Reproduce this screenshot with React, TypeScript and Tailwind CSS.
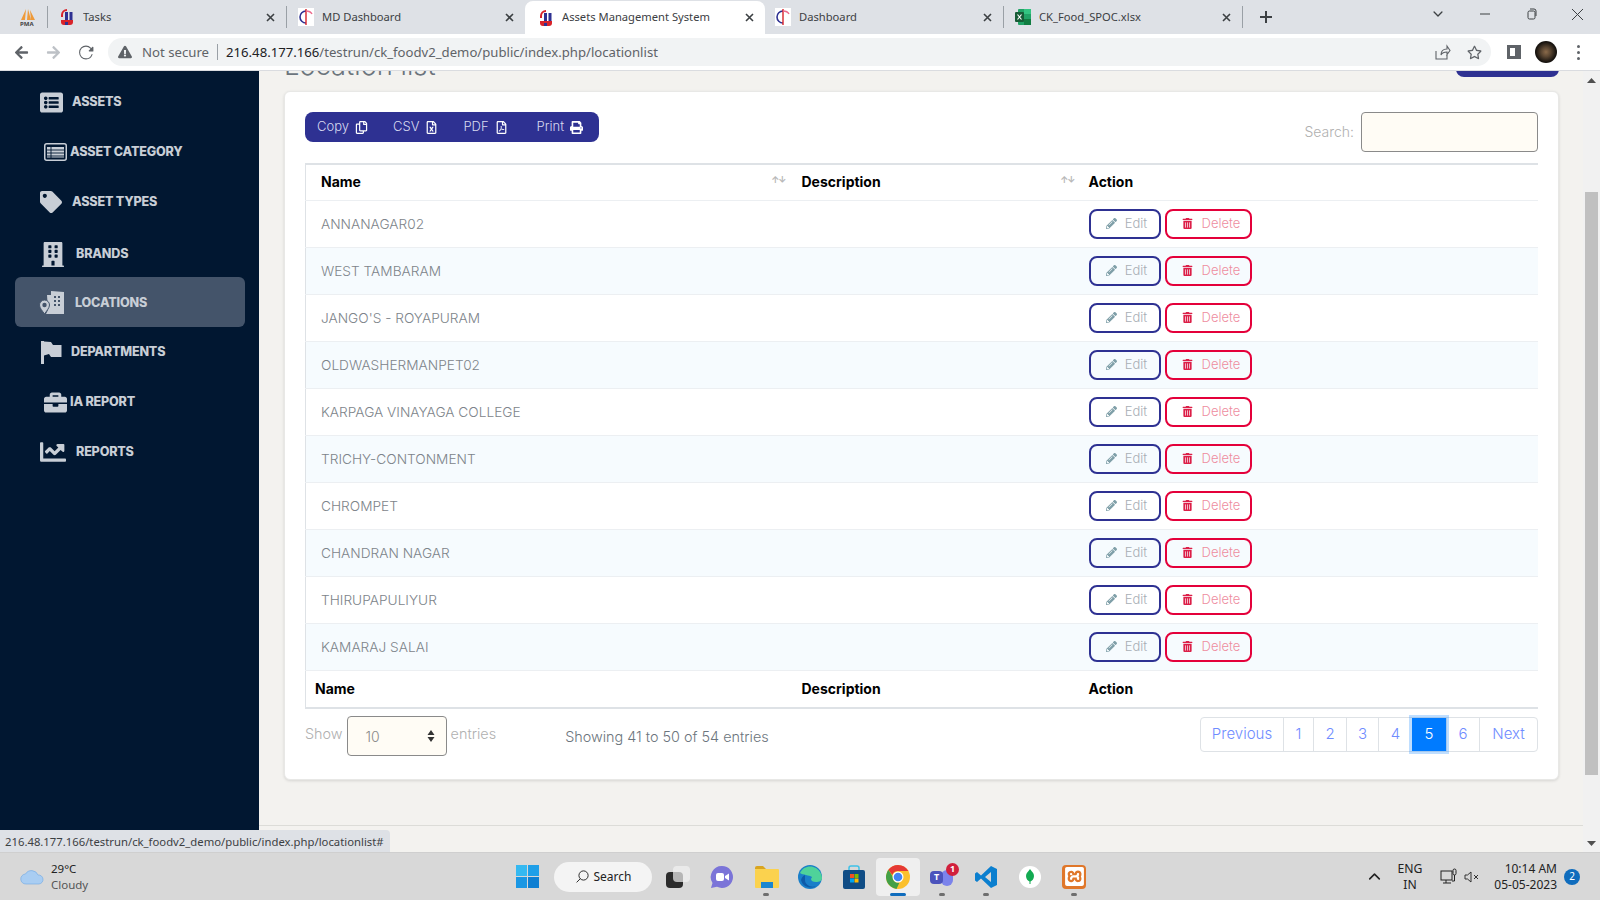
import { FaListAlt, FaTag, FaBuilding, FaBriefcase, FaChartLine, FaRegCopy, FaRegFileExcel, FaRegFilePdf, FaPrint, FaPencilAlt, FaTrashAlt, FaArrowLeft, FaArrowRight, FaExclamationTriangle, FaRegStar } from "react-icons/fa";
import { SiXampp } from "react-icons/si";
import { IoReloadOutline, IoChevronDownOutline, IoChevronUpOutline, IoSearchOutline } from "react-icons/io5";

const rows = ["ANNANAGAR02", "WEST TAMBARAM", "JANGO'S - ROYAPURAM", "OLDWASHERMANPET02", "KARPAGA VINAYAGA COLLEGE", "TRICHY-CONTONMENT", "CHROMPET", "CHANDRAN NAGAR", "THIRUPAPULIYUR", "KAMARAJ SALAI"];

function CategoryIcon() {
    return (
        <svg width="23" height="18" viewBox="0 0 23 18">
            <rect x=".75" y=".75" width="21.5" height="16.5" rx="2" fill="none" stroke="currentColor" strokeWidth="1.5" />
            <path d="M3 4h17v10.500H3z" fill="currentColor" />
            <path d="M3 7h17M3 10h17M3 13h17M7 4v11" stroke="#011731" strokeWidth=".9" />
        </svg>
    );
}

function LocationIcon() {
    return (
        <svg width="26" height="23" viewBox="0 0 26 23">
            <path d="M8 4h4V0l13 1v22H7l2-4z" fill="currentColor" />
            <path d="M15 5h2v2h-2zM19 5h2v2h-2zM15 9h2v2h-2zM19 9h2v2h-2zM15 13h2v2h-2zM19 13h2v2h-2z" fill="#44546a" />
            <path d="M5.500 9a5 5 0 0 1 5 5c0 3-3 6-5 9-2-3-5-6-5-9a5 5 0 0 1 5-5z" fill="currentColor" stroke="#44546a" strokeWidth="1" />
            <circle cx="5.500" cy="14" r="2.200" fill="#44546a" />
        </svg>
    );
}

function FlagIcon() {
    return (
        <svg width="21" height="23" viewBox="0 0 21 23">
            <path d="M0 0h3v23H0zM3 .5l7 .5 2 3h8.500v12H10l-2-3-5 1.500z" fill="currentColor" />
        </svg>
    );
}

const nav = [
    { label: "ASSETS", icon: <FaListAlt className="text-[23px]" />, row: "h-[50px]", iconBox: "w-[24px] ml-[39px]", gap: "ml-[9px] pt-[1px]" },
    { label: "ASSET CATEGORY", icon: <CategoryIcon />, row: "h-[50px]", iconBox: "w-[24px] ml-[43px]", gap: "ml-[3px] pt-[1px]" },
    { label: "ASSET TYPES", icon: <FaTag className="text-[22px]" />, row: "h-[50px]", iconBox: "w-[24px] ml-[39px]", gap: "ml-[9px] pt-[1px]" },
    { label: "BRANDS", icon: <FaBuilding className="text-[25px]" />, row: "h-[50px] pt-[4px]", iconBox: "w-[24px] ml-[41px]", gap: "ml-[11px]" },
    { label: "LOCATIONS", icon: <LocationIcon />, row: "h-[50px]", iconBox: "w-[26px] ml-[24px]", gap: "ml-[10px] pt-[3px]", active: true },
    { label: "DEPARTMENTS", icon: <FlagIcon />, row: "h-[50px]", iconBox: "w-[22px] ml-[40px]", gap: "ml-[9px] pt-[1px]" },
    { label: "IA REPORT", icon: <FaBriefcase className="text-[23px]" />, row: "h-[50px]", iconBox: "w-[24px] ml-[43px]", gap: "ml-[3px] pt-[1px]" },
    { label: "REPORTS", icon: <FaChartLine className="text-[26px]" />, row: "h-[50px]", iconBox: "w-[26px] ml-[40px]", gap: "ml-[10px] pt-[1px]" },
];

function TabClose() {
    return (
        <svg width="9" height="9" viewBox="0 0 9 9" className="mr-[11px] shrink-0">
            <path d="M1 1l7 7M8 1L1 8" stroke="#3c4043" strokeWidth="1.6" />
        </svg>
    );
}

function AppFavicon() {
    return (
        <svg width="16" height="18" viewBox="0 0 16 18">
            <path d="M8 1a6 6 0 0 0-6 6v2h2V7a4 4 0 0 1 4-4z" fill="#d8232a" />
            <rect x="6" y="4" width="3" height="8" fill="#2e3192" />
            <rect x="10.500" y="4" width="3" height="8" fill="#2e3192" />
            <path d="M2 12h12v2a3 3 0 0 1-3 3H5a3 3 0 0 1-3-3z" fill="#d8232a" />
            <rect x="6" y="14" width="3" height="3" fill="#2e3192" />
        </svg>
    );
}

function DashFavicon() {
    return (
        <svg width="16" height="18" viewBox="0 0 16 18">
            <rect width="16" height="18" fill="#fff" />
            <path d="M8 3a6 6 0 0 0 0 12" fill="none" stroke="#2e3192" strokeWidth="1.600" />
            <path d="M8 1v16" stroke="#d8232a" strokeWidth="1.400" />
            <path d="M8 3c3 0 5 1 6 3" fill="none" stroke="#ec6a8c" strokeWidth="1.400" />
        </svg>
    );
}

function ExcelIcon() {
    return (
        <svg width="16" height="16" viewBox="0 0 16 16">
            <rect x="3" y="0" width="13" height="16" rx="1" fill="#21a366" />
            <rect x="9" y="0" width="7" height="5" fill="#33c481" />
            <rect x="9" y="10" width="7" height="6" fill="#107c41" />
            <rect x="0" y="3" width="9" height="10" rx="1" fill="#185c37" />
            <path d="M2.500 5.500l4 5M6.500 5.500l-4 5" stroke="#fff" strokeWidth="1.200" />
        </svg>
    );
}

function Tab({ icon, title, active, noSep }: { icon: React.ReactNode; title: string; active?: boolean; noSep?: boolean }) {
    const base = active
        ? "relative z-10 flex items-center w-[240px] h-[33px] -mr-px mt-[1px] pl-[13px] bg-white rounded-t-lg"
        : noSep
            ? "flex items-center w-[239px] h-[22px] pl-[11px]"
            : "flex items-center w-[239px] h-[22px] pl-[11px] border-l border-[#9aa0a6]";
    return (
        <div className={base}>
            <span className="flex w-[16px] justify-center">{icon}</span>
            <span className="ml-[8px] flex-1 text-[11.2px] text-[#3c4043] truncate">{title}</span>
            <TabClose />
        </div>
    );
}

function TabStrip() {
    return (
        <div className="flex items-center h-[34px] bg-[#dee1e6] shrink-0">
            <div className="flex w-[47px] justify-center pl-[8px]">
                <svg width="18" height="18" viewBox="0 0 18 18">
                    <path d="M7 1L2 12h4zM9 1l-1 11h4zM11 2l1 10h4z" fill="#ee9a3a" />
                    <text x="1" y="17.500" fontSize="6" fontWeight="700" fill="#444">PMA</text>
                </svg>
            </div>
            <Tab icon={<AppFavicon />} title="Tasks" />
            <Tab icon={<DashFavicon />} title="MD Dashboard" />
            <Tab icon={<AppFavicon />} title="Assets Management System" active />
            <Tab icon={<DashFavicon />} title="Dashboard" noSep />
            <Tab icon={<ExcelIcon />} title="CK_Food_SPOC.xlsx" />
            <div className="flex items-center h-[22px] border-l border-[#9aa0a6] pl-[16px]">
                <svg width="14" height="14" viewBox="0 0 14 14"><path d="M7 1v12M1 7h12" stroke="#3c4043" strokeWidth="2" /></svg>
            </div>
            <div className="ml-auto flex items-center -mt-[6px] text-[#3c4043]">
                <IoChevronDownOutline className="text-[14px] mr-[34px]" />
                <svg width="12" height="12" viewBox="0 0 12 12" className="mr-[35px]"><path d="M1 6h10" stroke="#3c4043" strokeWidth="1" /></svg>
                <svg width="12" height="12" viewBox="0 0 12 12" className="mr-[33px]"><rect x="2" y="3" width="7" height="8" rx="1.500" fill="none" stroke="#3c4043" /><path d="M4 1h4a2 2 0 0 1 2 2v5" fill="none" stroke="#3c4043" /></svg>
                <svg width="13" height="13" viewBox="0 0 13 13" className="mr-[16px]"><path d="M1 1l11 11M12 1L1 12" stroke="#3c4043" strokeWidth="1" /></svg>
            </div>
        </div>
    );
}

function AddressBar() {
    return (
        <div className="flex items-center h-[37px] bg-white border-b border-[#dadce0] shrink-0">
            <FaArrowLeft className="ml-[14px] text-[15px] text-[#5f6368]" />
            <FaArrowRight className="ml-[17px] text-[15px] text-[#bdc1c6]" />
            <IoReloadOutline className="ml-[17px] text-[17px] text-[#5f6368]" />
            <div className="ml-[13px] flex items-center w-[1383px] h-[28px] rounded-full bg-[#f1f3f4] pl-[10px]">
                <FaExclamationTriangle className="text-[14px] text-[#5f6368]" />
                <span className="ml-[10px] pt-[1px] text-[13.2px] text-[#5f6368]">Not secure</span>
                <span className="mx-[8px] h-[16px] border-l border-[#9aa0a6]" />
                <span className="pt-[1px] text-[13.15px] text-[#202124]">216.48.177.166<span className="text-[#5f6368]">/testrun/ck_foodv2_demo/public/index.php/locationlist</span></span>
                <svg width="17" height="17" viewBox="0 0 17 17" className="ml-auto mr-[16px]" fill="none" stroke="#5f6368" strokeWidth="1.100">
                    <path d="M2 7v8h11v-4" />
                    <path d="M7 11c0-4 2-6 6-6V2l3 4.500-3 4V8c-3 0-5 1-6 3z" />
                </svg>
                <FaRegStar className="mr-[9px] text-[15px] text-[#5f6368]" />
            </div>
            <div className="ml-[16px] w-[14px] h-[14px] border-[3px] border-[#5f6368] border-r-[6px]" />
            <div className="ml-[14px] w-[22px] h-[22px] rounded-full bg-[radial-gradient(circle,#8a6a4a_0%,#5a4632_30%,#17130f_65%)]" />
            <div className="ml-[20px] flex flex-col gap-[3px]">
                <span className="w-[3px] h-[3px] rounded-full bg-[#5f6368]" />
                <span className="w-[3px] h-[3px] rounded-full bg-[#5f6368]" />
                <span className="w-[3px] h-[3px] rounded-full bg-[#5f6368]" />
            </div>
        </div>
    );
}

function Sidebar() {
    return (
        <aside className="w-[259px] shrink-0 bg-[#011731] text-[#c8ced6] pt-[6px]">
            {nav.map(item => (
                <div key={item.label} className={item.active ? `${item.row} flex items-center ml-[15px] w-[230px] rounded-md bg-[#44546a]` : `${item.row} flex items-center`}>
                    <span className={`${item.iconBox} flex justify-center shrink-0`}>{item.icon}</span>
                    <span className={`${item.gap} text-[12.6px] font-extrabold tracking-[-0.2px]`}>{item.label}</span>
                </div>
            ))}
        </aside>
    );
}

function LocationTable() {
    return (
        <table className="w-[1232px] table-fixed border-t-2 border-b-2 border-[#dee2e6] border-l border-l-[#dee2e6] text-[14px]">
            <colgroup>
                <col className="w-[480px]" />
                <col className="w-[287px]" />
                <col className="w-[465px]" />
            </colgroup>
            <thead>
                <tr className="h-[36px] text-black">
                    <th className="relative pl-[15px] pb-[2px] text-left font-bold">
                        Name
                        <span className="absolute right-0 top-[9px] text-[9px] leading-[12px] tracking-[-1px] text-[#b8b8b8]">↑↓</span>
                    </th>
                    <th className="relative pl-[16px] pb-[2px] text-left font-bold">
                        Description
                        <span className="absolute -right-[2px] top-[9px] text-[9px] leading-[12px] tracking-[-1px] text-[#b8b8b8]">↑↓</span>
                    </th>
                    <th className="pl-[16px] pb-[2px] text-left font-bold">Action</th>
                </tr>
            </thead>
            <tbody>
                {rows.map((name, i) => (
                    <tr key={name} className={i % 2 === 1 ? "h-[47px] border-t border-[#eceff2] bg-[#f6fbfe]" : "h-[47px] border-t border-[#eceff2]"}>
                        <td className="pl-[15px] pt-[2px] text-[13.7px] text-[#7d848a] font-light">{name}</td>
                        <td />
                        <td className="pl-[16px]">
                            <div className="flex gap-[4px]">
                                <button className="flex items-center justify-center gap-[8px] w-[72px] h-[30px] pl-[4px] rounded-lg border-2 border-[#2e3192] text-[13px] font-light text-[#a8aeb5]">
                                    <FaPencilAlt className="text-[11px] text-[#7f9fa8]" />
                                    Edit
                                </button>
                                <button className="flex items-center justify-center gap-[9px] w-[87px] h-[30px] pl-[6px] rounded-lg border-2 border-[#e4003a] text-[13px] font-light text-[#ee8d9f]">
                                    <FaTrashAlt className="text-[11px] text-[#dc1f48]" />
                                    Delete
                                </button>
                            </div>
                        </td>
                    </tr>
                ))}
            </tbody>
            <tfoot>
                <tr className="h-[38px] border-t border-[#eceff2] text-black">
                    <th className="pl-[9px] text-left font-bold">Name</th>
                    <th className="pl-[16px] text-left font-bold">Description</th>
                    <th className="pl-[16px] text-left font-bold">Action</th>
                </tr>
            </tfoot>
        </table>
    );
}

function Pagination() {
    const pages = [
        { t: "Previous", w: "w-[82px]" },
        { t: "1", w: "w-[30px]" },
        { t: "2", w: "w-[33px]" },
        { t: "3", w: "w-[32px]" },
        { t: "4", w: "w-[34px]" },
        { t: "5", w: "w-[34px]", active: true },
        { t: "6", w: "w-[33px]" },
        { t: "Next", w: "w-[58px]" },
    ];
    return (
        <div className="flex h-[35px] mt-[1px] rounded border border-[#dee2e6] text-[15px] font-light text-[#6f8cff]">
            {pages.map((p, i) => (
                <span key={p.t} className={p.active
                    ? `${p.w} relative z-10 flex items-center justify-center bg-[#007bff] text-white shadow-[0_0_0_3px_rgba(0,123,255,0.25)]`
                    : `${p.w} flex items-center justify-center ${i === 0 || i === 5 ? "" : "border-l border-[#dee2e6]"}`}>
                    {p.t}
                </span>
            ))}
        </div>
    );
}

function Content() {
    return (
        <main className="flex-1 min-w-0 flex flex-col overflow-hidden bg-[#f3f2ef]">
            <div className="shrink-0 flex justify-between h-[40px] -mt-[34px] ml-[25px] mr-[24px]">
                <h1 className="mt-[9px] text-[27.3px] leading-[40px] font-light text-[#6c757d]">Location list</h1>
                <div className="w-[103px] h-[40px] bg-[#2e3192] rounded-b-lg" />
            </div>
            <section className="shrink-0 mt-[14px] ml-[25px] mr-[24px] h-[689px] p-[20px] bg-white rounded-md border border-[#e8e8e6] shadow-[0_1px_3px_rgba(0,0,0,0.12)]">
                <div className="flex justify-between h-[51px]">
                    <div className="flex items-center h-[30px] pl-[12px] pr-[16px] rounded-lg bg-[#2e3192] text-[13px] font-light text-[#d8daf0]">
                        <span>Copy</span><FaRegCopy className="ml-[6px] text-[13px] text-white" />
                        <span className="ml-[25px]">CSV</span><FaRegFileExcel className="ml-[6px] text-[13px] text-white" />
                        <span className="ml-[25px]">PDF</span><FaRegFilePdf className="ml-[6px] text-[13px] text-white" />
                        <span className="ml-[29px]">Print</span><FaPrint className="ml-[6px] text-[13px] text-white" />
                    </div>
                    <div className="flex items-center h-[40px] gap-[7px] text-[14px] font-light text-[#b0b0b0]">
                        <span className="mb-[2px]">Search:</span>
                        <div className="w-[177px] h-[40px] rounded bg-[#fffcf5] border border-[#8a8a8a]" />
                    </div>
                </div>
                <LocationTable />
                <div className="flex justify-between mt-[7px]">
                    <div className="flex items-start">
                        <div className="flex items-center gap-[4px] text-[14.4px] font-light text-[#b0b0b0]">
                            <span className="mb-[4px]">Show</span>
                            <div className="flex items-center justify-between w-[100px] h-[40px] pl-[18px] pr-[11px] rounded bg-[#fffcf5] border border-[#8a8a8a] text-[14px] text-[#8a8a8a]">
                                10
                                <svg width="8" height="12" viewBox="0 0 8 12" fill="#333"><path d="M4 0l3.500 5h-7zM4 12L.5 7h7z" /></svg>
                            </div>
                            <span className="mb-[4px]">entries</span>
                        </div>
                        <span className="ml-[69px] mt-[10px] text-[14.4px] font-light text-[#6c757d]">Showing 41 to 50 of 54 entries</span>
                    </div>
                    <Pagination />
                </div>
            </section>
            <div className="mt-[45px] flex-1 border-t border-[#dcdcd8]" />
        </main>
    );
}

function Scrollbar() {
    return (
        <div className="w-[17px] shrink-0 flex flex-col items-center bg-[#f1f1f1]">
            <svg width="9" height="5" viewBox="0 0 9 5" className="mt-[7px]"><path d="M4.500 0L9 5H0z" fill="#505050" /></svg>
            <div className="mt-[109px] w-[13px] h-[583px] bg-[#c0c0c0]" />
            <svg width="9" height="5" viewBox="0 0 9 5" className="mt-[66px]"><path d="M4.500 5L9 0H0z" fill="#505050" /></svg>
        </div>
    );
}

function TaskIcon({ children, active, dot }: { children: React.ReactNode; active?: boolean; dot?: boolean }) {
    return (
        <div className={active ? "relative flex items-center justify-center w-[44px] h-[38px] rounded bg-[#efefef]" : "relative flex items-center justify-center w-[44px] h-[38px]"}>
            {children}
            {dot && <span className="absolute bottom-0 w-[6px] h-[3px] rounded-full bg-[#6e6e6e]" />}
            {active && <span className="absolute bottom-0 w-[16px] h-[3px] rounded-full bg-[#0f6cbd]" />}
        </div>
    );
}

function Taskbar() {
    return (
        <footer className="relative flex items-center h-[48px] shrink-0 bg-[#d8d8d8] border-t border-[#cfcfcf] font-['Noto_Sans',sans-serif]">
            <svg width="25" height="16" viewBox="0 0 25 16" className="ml-[20px]">
                <path d="M6 15a5 5 0 0 1-.5-10A7 7 0 0 1 18 6a4.500 4.500 0 0 1 1 9z" fill="#a9cdf2" stroke="#6ea8e4" strokeWidth=".6" />
            </svg>
            <div className="ml-[6px] w-[440px] text-[11.5px] leading-[16px]">
                <div className="text-[#222]">29°C</div>
                <div className="text-[#555]">Cloudy</div>
            </div>
            <div className="ml-[25px] grid grid-cols-2 gap-[1px] w-[23px] h-[23px]">
                <span className="bg-[#35b9f1]" /><span className="bg-[#1f9fe8]" />
                <span className="bg-[#1a97e4]" /><span className="bg-[#0f7fd2]" />
            </div>
            <div className="ml-[15px] flex items-center justify-center gap-[4px] w-[98px] h-[30px] rounded-full bg-[#f4f4f4] text-[12px] text-[#222]">
                <IoSearchOutline className="text-[15px] -scale-x-100" />
                Search
            </div>
            <div className="relative ml-[14px] w-[24px] h-[22px]">
                <span className="absolute left-0 bottom-0 w-[17px] h-[16px] rounded-sm bg-[#2b2b2b]" />
                <span className="absolute right-0 top-0 w-[17px] h-[16px] rounded-sm bg-[#f2f2f2]/70" />
            </div>
            <div className="ml-[10px] flex items-center">
                <TaskIcon>
                    <svg width="24" height="24" viewBox="0 0 24 24"><path d="M12 1a11 11 0 1 1-5 20.800L1 23l1.500-5A11 11 0 0 1 12 1z" fill="#7b74d8" /><rect x="6" y="8" width="8" height="8" rx="2" fill="#fff" /><path d="M15 11l4-2.500v7L15 13z" fill="#fff" /></svg>
                </TaskIcon>
                <TaskIcon dot>
                    <svg width="25" height="23" viewBox="0 0 25 23"><path d="M1 3a2 2 0 0 1 2-2h6l3 3H1z" fill="#d9a520" /><rect x="1" y="4" width="24" height="19" rx="1" fill="#fbd24e" /><path d="M7 17h12v6H7z" fill="#1a86d0" /></svg>
                </TaskIcon>
                <TaskIcon>
                    <svg width="24" height="24" viewBox="0 0 24 24"><circle cx="12" cy="12" r="12" fill="#1a7fc9" /><path d="M2 8C5 1 13 0 18 3c4 3 6 6 6 10 0 3-3 4-6 4-3 0-5-1-5-3 0-1 1-1 1-2-3-2-9-2-12-4z" fill="#4fd29a" /><path d="M7 15c0 5 6 8 11 6-4 3-13 2-15-6 1-3 2-4 4-5z" fill="#0e5aa8" /></svg>
                </TaskIcon>
                <TaskIcon>
                    <svg width="24" height="24" viewBox="0 0 24 24"><path d="M7 5V3a2 2 0 0 1 2-2h6a2 2 0 0 1 2 2v2" fill="none" stroke="#3ec1e8" strokeWidth="1.500" /><rect x="1" y="5" width="22" height="19" rx="2" fill="#0f4c85" /><rect x="8" y="9" width="4" height="4" fill="#f25022" /><rect x="12.500" y="9" width="4" height="4" fill="#7fba00" /><rect x="8" y="13.500" width="4" height="4" fill="#00a4ef" /><rect x="12.500" y="13.500" width="4" height="4" fill="#ffb900" /></svg>
                </TaskIcon>
                <TaskIcon active>
                    <svg width="24" height="24" viewBox="0 0 24 24">
                        <circle cx="12" cy="12" r="12" fill="#fbc02d" />
                        <path d="M12 0a12 12 0 0 1 10.400 6H12a6 6 0 0 0-5.700 4L2.400 4.800A12 12 0 0 1 12 0z" fill="#e53935" />
                        <path d="M2.400 4.800L7 12a5 5 0 0 0 6.500 5.500L10.500 23.900A12 12 0 0 1 2.400 4.800z" fill="#43a047" />
                        <circle cx="12" cy="12" r="5.500" fill="#fff" />
                        <circle cx="12" cy="12" r="4.300" fill="#4285f4" />
                    </svg>
                </TaskIcon>
                <TaskIcon dot>
                    <span className="relative block w-[24px] h-[24px]">
                        <span className="absolute right-[1px] top-[5px] w-[12px] h-[16px] rounded-md bg-[#7b83eb]" />
                        <span className="absolute left-0 top-[6px] flex items-center justify-center w-[13px] h-[13px] rounded-sm bg-[#4b53bc] text-[9px] font-bold text-white">T</span>
                        <span className="absolute -right-[5px] -top-[2px] flex items-center justify-center w-[13px] h-[13px] rounded-full bg-[#d1203c] text-[9px] font-bold text-white">1</span>
                    </span>
                </TaskIcon>
                <TaskIcon dot>
                    <svg width="24" height="24" viewBox="0 0 24 24"><path d="M17 1l6 3v16l-6 3-10-9.500L3 17l-2-1.500v-7L3 7l4 3.500zM17 7l-6 5 6 5z" fill="#0b7fcf" fillRule="evenodd" /></svg>
                </TaskIcon>
                <TaskIcon>
                    <span className="flex items-center justify-center w-[22px] h-[22px] rounded-full bg-white">
                        <svg width="8" height="15" viewBox="0 0 8 15"><path d="M4 0c2 3 4 4 4 7s-2 5-3.500 5.500V15h-1v-2.500C2 12 0 10 0 7s2-4 4-7z" fill="#13aa52" /></svg>
                    </span>
                </TaskIcon>
                <TaskIcon dot>
                    <span className="flex items-center justify-center w-[24px] h-[24px] rounded bg-[#e0772a]">
                        <SiXampp className="text-[19px] text-white" />
                    </span>
                </TaskIcon>
            </div>
            <IoChevronUpOutline className="ml-[270px] text-[17px] text-[#222]" />
            <div className="ml-[11px] w-[32px] text-center text-[12.2px] leading-[16px] text-[#222]">ENG<br />IN</div>
            <svg width="18" height="18" viewBox="0 0 18 18" className="ml-[14px]" fill="none" stroke="#222" strokeWidth="1">
                <rect x="1" y="3" width="11" height="9" /><path d="M6 12v3M3 15h8" /><rect x="13" y="1" width="3" height="6" rx="1.500" /><path d="M14.500 7v6H12" />
            </svg>
            <svg width="16" height="12" viewBox="0 0 16 12" className="ml-[6px]" fill="none" stroke="#333" strokeWidth="1">
                <path d="M1 4h2.500L7 1v10L3.500 8H1zM10 4l4 4M14 4l-4 4" />
            </svg>
            <div className="ml-auto text-right text-[12px] leading-[16px] text-[#222]">10:14 AM<br />05-05-2023</div>
            <span className="ml-[7px] mr-[20px] flex items-center justify-center w-[16px] h-[16px] rounded-full bg-[#0f6cbd] text-[10px] text-white">2</span>
        </footer>
    );
}

export default function App() {
    return (
        <div className="relative flex flex-col w-[1600px] h-[900px] overflow-hidden font-['Noto_Sans',sans-serif]">
            <TabStrip />
            <AddressBar />
            <div className="flex flex-1 min-h-0 font-['Inter',sans-serif]">
                <Sidebar />
                <Content />
                <Scrollbar />
            </div>
            {/* hover url, sits over the sidebar */}
            <div className="absolute left-0 bottom-[48px] flex items-center w-[390px] h-[22px] pl-[5px] pt-[3px] bg-[#dee1e6] rounded-tr text-[11.3px] text-[#3c4043] font-['Noto_Sans',sans-serif]">
                216.48.177.166/testrun/ck_foodv2_demo/public/index.php/locationlist#
            </div>
            <Taskbar />
        </div>
    );
}
